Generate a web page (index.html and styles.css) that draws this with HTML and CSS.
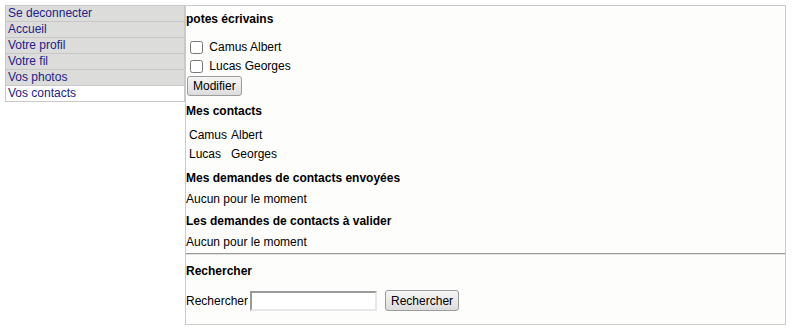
FILE: index.html
```html
<!DOCTYPE html>
<html lang="fr">
<head>
    <meta charset="UTF-8">
    <title>Vos contacts</title>
    <link rel="stylesheet" href="styles.css">
</head>
<body>
    <ul class="menu">
        <li><a href="#">Se deconnecter</a></li>
        <li><a href="#">Accueil</a></li>
        <li><a href="#">Votre profil</a></li>
        <li><a href="#">Votre fil</a></li>
        <li><a href="#">Vos photos</a></li>
        <li class="current"><a href="#">Vos contacts</a></li>
    </ul>

    <div class="content">
        <div class="block">
            <h3 class="first">potes écrivains</h3>
            <form class="group">
                <label><input type="checkbox"> Camus Albert</label>
                <label><input type="checkbox"> Lucas Georges</label>
                <button type="button">Modifier</button>
            </form>

            <h3>Mes contacts</h3>
            <table class="contacts">
                <tr><td>Camus</td><td>Albert</td></tr>
                <tr><td>Lucas</td><td>Georges</td></tr>
            </table>

            <h3>Mes demandes de contacts envoyées</h3>
            <p>Aucun pour le moment</p>

            <h3>Les demandes de contacts à valider</h3>
            <p>Aucun pour le moment</p>
        </div>

        <div class="block search">
            <h3>Rechercher</h3>
            <form class="search-form">
                <label for="q">Rechercher</label>
                <input type="text" id="q">
                <button type="button">Rechercher</button>
            </form>
        </div>
    </div>
</body>
</html>
```

FILE: styles.css
```css
* {
    box-sizing: border-box;
}

body {
    margin: 5px;
    font-family: "Liberation Sans", Arial, sans-serif;
    font-size: 12px;
    line-height: 14px;
    color: #000;
    background: #fff;
    display: flex;
    align-items: flex-start;
}

.menu {
    list-style: none;
    margin: 0;
    padding: 0;
    width: 180px;
    flex-shrink: 0;
    border: 1px solid #c8c8c8;
    border-bottom: none;
}

.menu li {
    height: 16px;
    line-height: 15px;
    padding-left: 2px;
    background: #dcdcda;
    border-bottom: 1px solid #c8c8c8;
}

.menu li.current {
    background: #fff;
}

.menu a {
    color: #22208a;
    text-decoration: none;
}

.content {
    width: 601px;
    height: 320px;
    border: 1px solid #cbcbcb;
    background: #fdfdfb;
}

h3 {
    font-size: 12px;
    font-weight: bold;
    margin: 7px 0;
}

h3.first {
    margin: 6px 0 12px;
}

p {
    margin: 0 0 8px;
}

.block p:last-child {
    margin-bottom: 0;
}

.group {
    margin: 0;
}

.group label {
    display: block;
    height: 19px;
}

.group input {
    margin: 3px 3px 3px 4px;
    width: 13px;
    height: 13px;
    vertical-align: -3px;
}

button {
    font-family: inherit;
    font-size: 12px;
    color: #000;
    background: linear-gradient(#f6f6f6, #dcdcdc);
    border: 1px solid #9c9c9c;
    border-radius: 3px;
    padding: 0 5px;
    height: 20px;
}

.group button {
    margin: 0 0 0 1px;
    display: block;
}

.group + h3 {
    margin-top: 8px;
    margin-bottom: 6px;
}

.contacts {
    border-spacing: 2px;
    margin: 0 0 1px;
}

.contacts td {
    padding: 1px;
    height: 17px;
}

.search {
    border-top: 1px solid #9a9a9a;
    box-shadow: inset 0 1px #e2e2e2;
    margin-top: 4px;
}

.search h3 {
    margin: 10px 0 12px;
}

.search-form {
    display: flex;
    align-items: center;
    height: 21px;
}

.search-form input {
    width: 127px;
    height: 20px;
    margin: 0 8px 0 2px;
    border: 2px solid #e8e8e8;
    border-top-color: #9a9a9a;
    border-left-color: #9a9a9a;
    background: #fff;
}

.search-form button {
    height: 21px;
}
```
